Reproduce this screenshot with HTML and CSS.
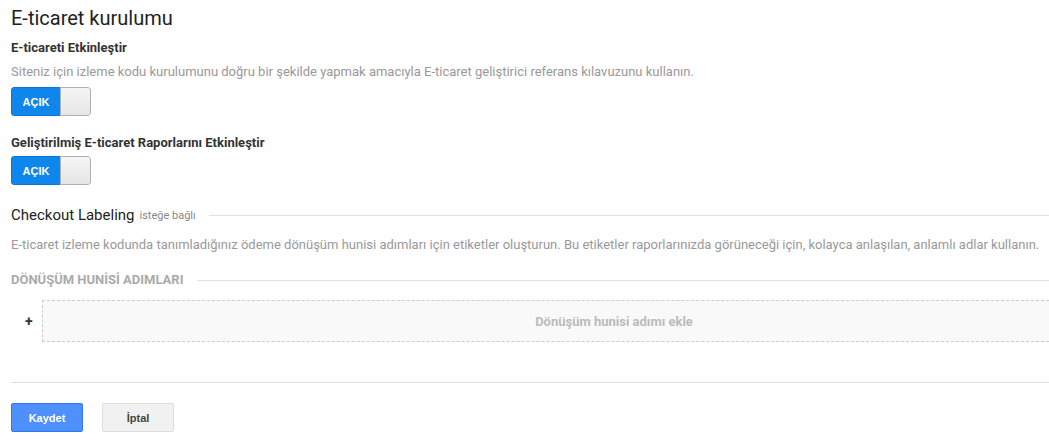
FILE: index.html
```html
<!DOCTYPE html>
<html lang="tr">
<head>
    <meta charset="UTF-8">
    <title>E-ticaret kurulumu</title>
    <link rel="stylesheet" href="styles.css">
</head>
<body>
    <div class="page">
        <h1>E-ticaret kurulumu</h1>

        <div class="setting">
            <div class="setting-label">E-ticareti Etkinleştir</div>
            <div class="setting-help">Siteniz için izleme kodu kurulumunu doğru bir şekilde yapmak amacıyla E-ticaret geliştirici referans kılavuzunu kullanın.</div>
            <div class="toggle">
                <span class="toggle-on">AÇIK</span>
                <span class="toggle-knob"></span>
            </div>
        </div>

        <div class="setting setting-second">
            <div class="setting-label">Geliştirilmiş E-ticaret Raporlarını Etkinleştir</div>
            <div class="toggle">
                <span class="toggle-on">AÇIK</span>
                <span class="toggle-knob"></span>
            </div>
        </div>

        <div class="section-head">
            <span class="section-title">Checkout Labeling</span>
            <span class="section-optional">isteğe bağlı</span>
            <span class="rule"></span>
        </div>
        <div class="section-help">E-ticaret izleme kodunda tanımladığınız ödeme dönüşüm hunisi adımları için etiketler oluşturun. Bu etiketler raporlarınızda görüneceği için, kolayca anlaşılan, anlamlı adlar kullanın.</div>

        <div class="steps-head">
            <span class="steps-title">DÖNÜŞÜM HUNİSİ ADIMLARI</span>
            <span class="rule"></span>
        </div>

        <div class="add-step">
            <span class="plus">+</span>
            <div class="add-box">Dönüşüm hunisi adımı ekle</div>
        </div>

        <div class="actions">
            <button class="btn btn-primary">Kaydet</button>
            <button class="btn btn-cancel">İptal</button>
        </div>
    </div>
</body>
</html>
```

FILE: styles.css
```css
body {
    margin: 0;
    font-family: Roboto, "Liberation Sans", Arial, sans-serif;
    color: #222;
    background-color: #fff;
}
.page {
    padding: 6px 0 0 11px;
}
h1 {
    font-size: 20px;
    font-weight: 400;
    margin: 0;
    line-height: 24px;
}
.setting {
    margin-top: 10px;
}
.setting-second {
    margin-top: 19px;
}
.setting-label {
    font-size: 13px;
    font-weight: 700;
    line-height: 16px;
    color: #333;
}
.setting-help {
    font-size: 13px;
    color: #999;
    line-height: 16px;
    margin-top: 8px;
}
.toggle {
    display: flex;
    width: 80px;
    height: 29px;
    margin-top: 7px;
    border-radius: 3px;
    overflow: hidden;
    box-sizing: border-box;
}
.setting-second .toggle {
    margin-top: 5px;
}
.toggle-on {
    width: 48px;
    background-color: #0f86ec;
    border: 1px solid #0b78d8;
    border-right: none;
    border-radius: 3px 0 0 3px;
    color: #fff;
    font-family: "Liberation Sans", Arial, sans-serif;
    font-size: 11px;
    font-weight: 700;
    display: flex;
    align-items: center;
    justify-content: center;
}
.toggle-knob {
    flex: 1;
    background: linear-gradient(#f4f4f4, #e6e6e6);
    border: 1px solid #b0b0b0;
    border-radius: 0 3px 3px 0;
}
.section-head {
    display: flex;
    align-items: center;
    margin-top: 20px;
}
.section-title {
    font-size: 15px;
    color: #222;
    line-height: 20px;
}
.section-optional {
    font-size: 11px;
    color: #888;
    margin-left: 5px;
}
.rule {
    flex: 1;
    height: 1px;
    background-color: #e0e0e0;
    margin-left: 13px;
}
.section-help {
    font-size: 13px;
    color: #999;
    line-height: 16px;
    margin-top: 12px;
}
.steps-head {
    display: flex;
    align-items: center;
    margin-top: 20px;
}
.steps-title {
    font-size: 13px;
    font-weight: 700;
    color: #aaa;
    line-height: 14px;
}
.steps-head .rule {
    margin-left: 13px;
}
.add-step {
    display: flex;
    align-items: center;
    margin-top: 13px;
}
.plus {
    width: 31px;
    padding-left: 14px;
    box-sizing: border-box;
    font-size: 14px;
    font-weight: 700;
    color: #333;
}
.add-box {
    flex: 1;
    height: 42px;
    box-sizing: border-box;
    border: 1px dashed #ccc;
    border-right: none;
    padding-left: 136px;
    background-color: #f9f9f9;
    color: #bbb;
    font-size: 13px;
    font-weight: 700;
    display: flex;
    align-items: center;
    justify-content: center;
}
.actions {
    border-top: 1px solid #e2e2e2;
    margin-top: 40px;
    padding-top: 20px;
    display: flex;
    gap: 19px;
}
.btn {
    width: 72px;
    height: 29px;
    border-radius: 2px;
    font-family: "Liberation Sans", Arial, sans-serif;
    font-size: 11px;
    font-weight: 700;
    cursor: pointer;
}
.btn-primary {
    background-color: #4d90fe;
    border: 1px solid #3079ed;
    color: #fff;
}
.btn-cancel {
    background-color: #f1f1f1;
    border: 1px solid #dcdcdc;
    color: #444;
}
```
